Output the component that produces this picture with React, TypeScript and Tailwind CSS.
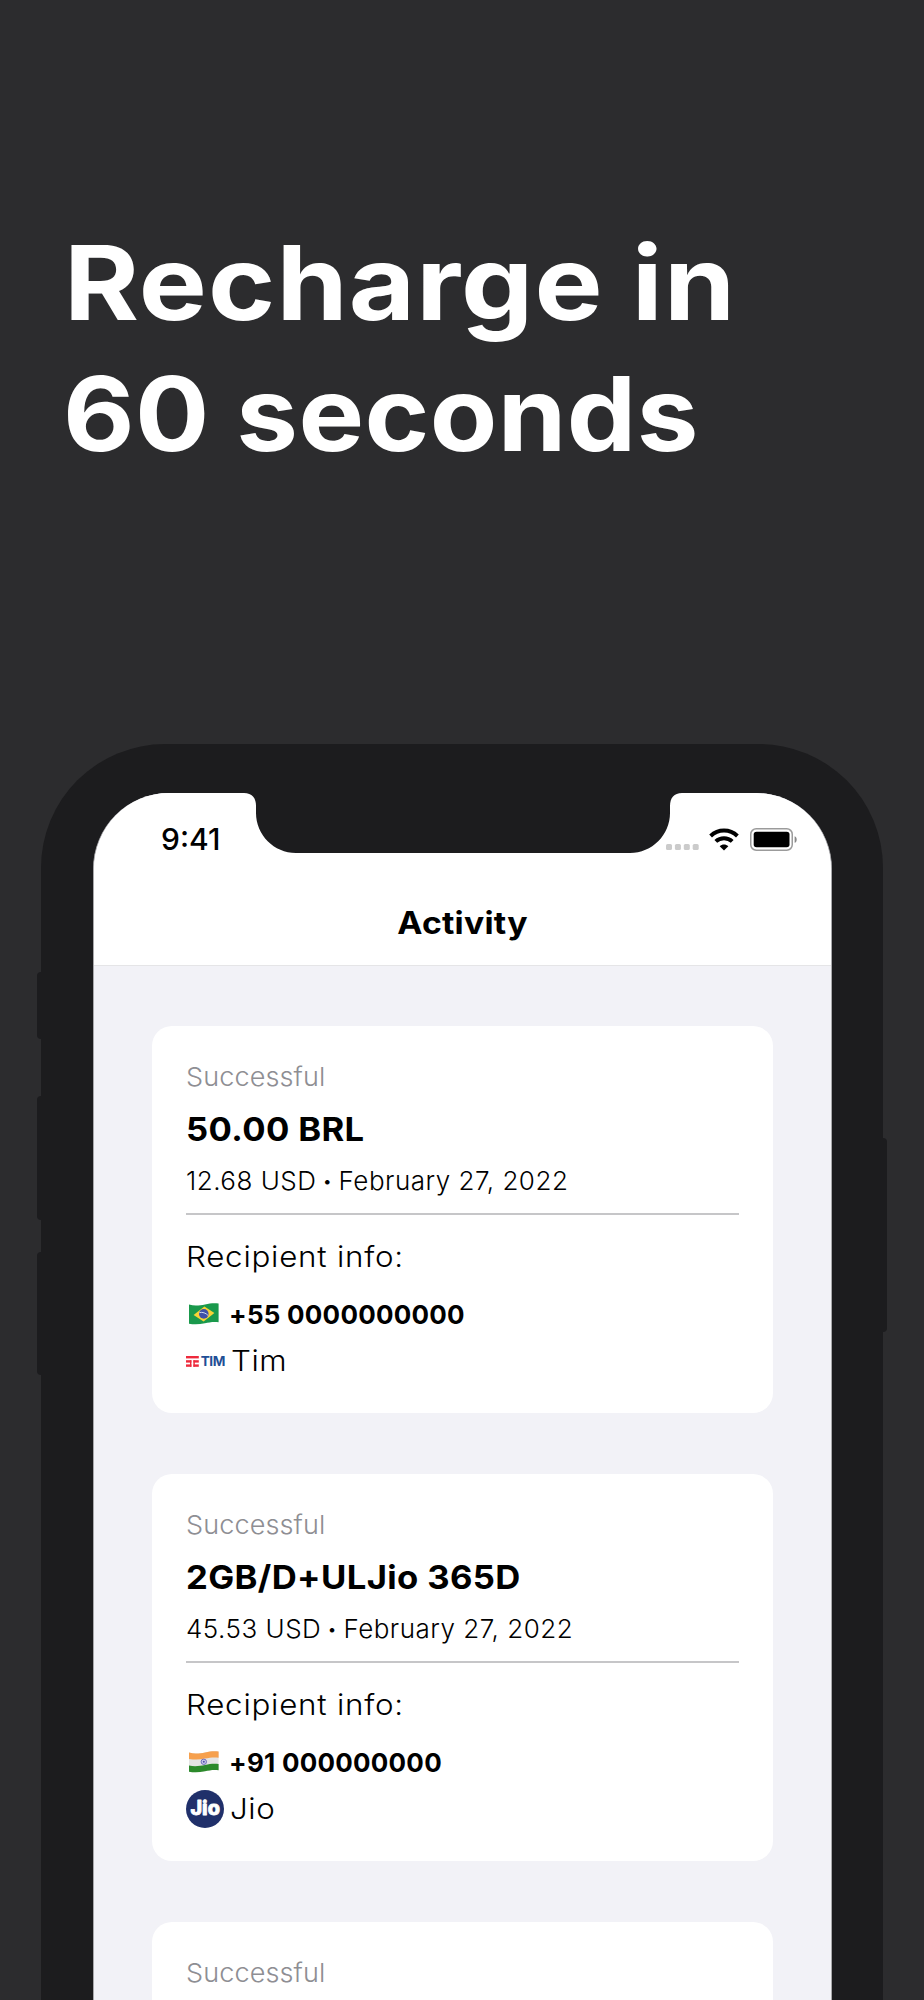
import React from 'react';

type Activity = {
  title: string;
  price: string;
  date: string;
  phone: string;
  carrier: string;
  flag: React.ReactNode;
  logo: React.ReactNode;
};

const FLAG_SHAPE = 'M1 2.6C7 4.4 12 3.4 17 2.4C22 1.3 26 1 30.6 1.5V20.2C25 19.6 21 20.4 17 21.3C11 22.6 6 22.6 1 21.8Z';

const BrazilFlag = () => (
  <svg viewBox="0 0 32 24" className="w-8 h-6 shrink-0">
    <path d={FLAG_SHAPE} fill="#1a994c" />
    <path d="M5.6 12.9L16.4 4.6L26.4 10.9L15.6 19.6Z" fill="#f8d336" />
    <circle cx="15.8" cy="11.9" r="4.8" fill="#3f51a8" />
    <path d="M11.4 10.6C14.5 9.8 18 11 20.2 13.6" stroke="#cfd8f0" strokeWidth="1" fill="none" />
  </svg>
);

const IndiaFlag = () => (
  <svg viewBox="0 0 32 24" className="w-8 h-6 shrink-0">
    <path d={FLAG_SHAPE} fill="#e4e4e4" />
    <path d="M1 2.6C7 4.4 12 3.4 17 2.4C22 1.3 26 1 30.6 1.5V7.7C26 7.2 22 7.5 17 8.6C12 9.7 7 10 1 8.9Z" fill="#f6a04d" />
    <path d="M1 15.6C7 16.7 12 16 17 15C22 13.9 26 13.6 30.6 14.1V20.2C25 19.6 21 20.4 17 21.3C11 22.6 6 22.6 1 21.8Z" fill="#2c8a2b" />
    <circle cx="15.8" cy="11.8" r="2.7" fill="#c9c9ea" stroke="#6464b8" strokeWidth="0.9" />
    <circle cx="15.8" cy="11.8" r="1" fill="#5050aa" />
  </svg>
);

const TimLogo = () => (
  <div className="flex w-[39px] shrink-0 items-center justify-between">
    <svg viewBox="0 0 13 11" className="w-[13px] h-[11px]" fill="#ee2a3c">
      <rect x="0" y="0" width="12.8" height="2.4" />
      <rect x="0" y="4.2" width="5.4" height="2.4" />
      <rect x="7.4" y="4.2" width="5.4" height="2.4" />
      <rect x="0" y="8.4" width="5.4" height="2.4" />
      <rect x="7.4" y="8.4" width="5.4" height="2.4" />
      <rect x="4" y="4.2" width="1.4" height="6.6" />
      <rect x="7.4" y="4.2" width="1.4" height="6.6" />
    </svg>
    <span className="text-[13.6px] leading-[20px] font-bold tracking-[-0.4px] text-[#1f4f96]">TIM</span>
  </div>
);

const JioLogo = () => (
  <svg viewBox="0 0 38 38" className="w-[38px] h-[38px] shrink-0">
    <circle cx="19" cy="19" r="19" fill="#20306a" />
    <text x="4.4" y="25.3" fontSize="20" fontWeight="800" fill="#fff" stroke="#fff" strokeWidth="0.8" strokeLinejoin="round" textLength="29.5" lengthAdjust="spacingAndGlyphs" fontFamily="Inter, sans-serif">Jio</text>
  </svg>
);

const activities: Activity[] = [
  {
    title: '50.00 BRL',
    price: '12.68 USD',
    date: 'February 27, 2022',
    phone: '+55 0000000000',
    carrier: 'Tim',
    flag: <BrazilFlag />,
    logo: <TimLogo />,
  },
  {
    title: '2GB/D+ULJio 365D',
    price: '45.53 USD',
    date: 'February 27, 2022',
    phone: '+91 000000000',
    carrier: 'Jio',
    flag: <IndiaFlag />,
    logo: <JioLogo />,
  },
];

const Card = ({ children }: { children?: React.ReactNode }) => (
  <article className="h-[387px] shrink-0 rounded-[20px] bg-white px-[34px] pt-[30px] whitespace-nowrap text-black">
    <p className="h-[42px] origin-left scale-x-[1.04] leading-[42px] text-[26px] font-light tracking-[0.1px] text-[#8e8e93]">Successful</p>
    {children}
  </article>
);

const ActivityCard = ({ item }: { item: Activity }) => (
  <Card>
    <h2 className="h-[62px] origin-left scale-x-[1.05] leading-[62px] text-[33px] font-bold tracking-[0.35px]">{item.title}</h2>
    <p className="flex h-[42px] items-center text-[26px] leading-[42px] font-light tracking-[0.5px]">
      <span>{item.price}</span>
      <span className="mx-[6px] text-[17px]">•</span>
      <span>{item.date}</span>
    </p>
    <hr className="mt-[11px] h-[2px] border-0 bg-[#c6c6c8]" />
    <p className="mt-[21px] h-[42px] origin-left scale-x-[1.08] leading-[42px] text-[29px] font-light tracking-[0.7px]">Recipient info:</p>
    <div className="mt-[14px] flex h-[44px] items-center pl-[2px]">
      {item.flag}
      <span className="ml-[9px] text-[26px] font-bold tracking-[0.25px]">{item.phone}</span>
    </div>
    <div className="mt-[2px] flex h-[46px] items-center">
      {item.logo}
      <span className="ml-[6px] origin-left scale-x-[1.08] text-[29px] font-light tracking-[0.5px]">{item.carrier}</span>
    </div>
  </Card>
);

const Notch = () => (
  <svg viewBox="0 0 438 61" className="absolute left-[150px] -top-px w-[438px] h-[61px]">
    <path d="M0 0H438V1C430 1 426 6 426 14V21C426 43 408 61 386 61H52C30 61 12 43 12 21V14C12 6 8 1 0 1Z" fill="#1c1c1e" />
  </svg>
);

const StatusIcons = () => (
  <div className="flex items-center">
    <svg viewBox="0 0 34 6" className="mt-4 w-[34px] h-[6px]" fill="#cbcbcb">
      <rect x="0" width="6" height="6" rx="1.6" />
      <rect x="8.9" width="6" height="6" rx="1.6" />
      <rect x="17.8" width="6" height="6" rx="1.6" />
      <rect x="26.7" width="6" height="6" rx="1.6" />
    </svg>
    <svg viewBox="0 0 30 23" className="ml-[9px] w-[30px] h-[23px]" fill="none" stroke="#000">
      <path d="M1.6 8C9.2 .8 20.8 .8 28.4 8" strokeWidth="4" />
      <path d="M6.8 13.4C11.4 9.1 18.6 9.1 23.2 13.4" strokeWidth="4" />
      <path d="M15 22.5L10.7 18.3C13.1 16 16.9 16 19.3 18.3Z" fill="#000" stroke="none" />
    </svg>
    <svg viewBox="0 0 48 23" className="ml-[11px] w-12 h-[23px]">
      <rect x="0.75" y="0.75" width="41.5" height="21.5" rx="5.5" fill="none" stroke="#9b9b9b" strokeWidth="1.5" />
      <rect x="3.7" y="3.7" width="35.8" height="15.6" rx="2.8" />
      <path d="M44.6 8.2C47.4 8.8 47.4 14.2 44.6 14.8Z" fill="#888" />
    </svg>
  </div>
);

export default function App() {
  return (
    <main className="relative h-[2000px] w-[924px] overflow-hidden bg-[#2c2c2e] font-['Inter',sans-serif]">
      <h1 className="h-[744px] pt-[217px] pl-[64px] text-[103px] leading-[131px] font-bold whitespace-nowrap text-white">
        <span className="block origin-left scale-x-[1.11] tracking-[1px]">Recharge in</span>
        <span className="-ml-[1px] block origin-left scale-x-[1.07] tracking-[0.4px]">60 seconds</span>
      </h1>

      {/* side buttons */}
      <i className="absolute left-[37px] top-[972px] h-[67px] w-3 rounded-[4px] bg-[#1c1c1e]" />
      <i className="absolute left-[37px] top-[1096px] h-[124px] w-3 rounded-[4px] bg-[#1c1c1e]" />
      <i className="absolute left-[37px] top-[1252px] h-[123px] w-3 rounded-[4px] bg-[#1c1c1e]" />
      <i className="absolute left-[875px] top-[1138px] h-[194px] w-3 rounded-[4px] bg-[#1c1c1e]" />

      <div className="relative ml-[41px] h-[1256px] w-[842px] rounded-t-[124px] bg-[#1c1c1e] px-[52px] pt-[49px]">
        <div className="relative flex h-full w-[739px] flex-col overflow-hidden rounded-t-[76px] border-x border-[#a8a8ab] bg-[#f2f2f7]">
          <header className="h-[173px] shrink-0 border-b border-[#e5e5e7] bg-white">
            <div className="flex h-[92px] items-center justify-between pl-[67px] pr-[33px]">
              <span className="text-[30px] leading-[36px] font-medium text-black">9:41</span>
              <StatusIcons />
            </div>
            <h2 className="mt-[16px] h-[44px] scale-x-[1.09] text-center text-[31px] leading-[44px] font-bold tracking-[0.2px] text-black">Activity</h2>
          </header>
          <Notch />
          <section className="flex flex-col gap-[61px] px-[58px] pt-[60px]">
            {activities.map((item) => (
              <ActivityCard key={item.phone} item={item} />
            ))}
            <Card />
          </section>
        </div>
      </div>
    </main>
  );
}
